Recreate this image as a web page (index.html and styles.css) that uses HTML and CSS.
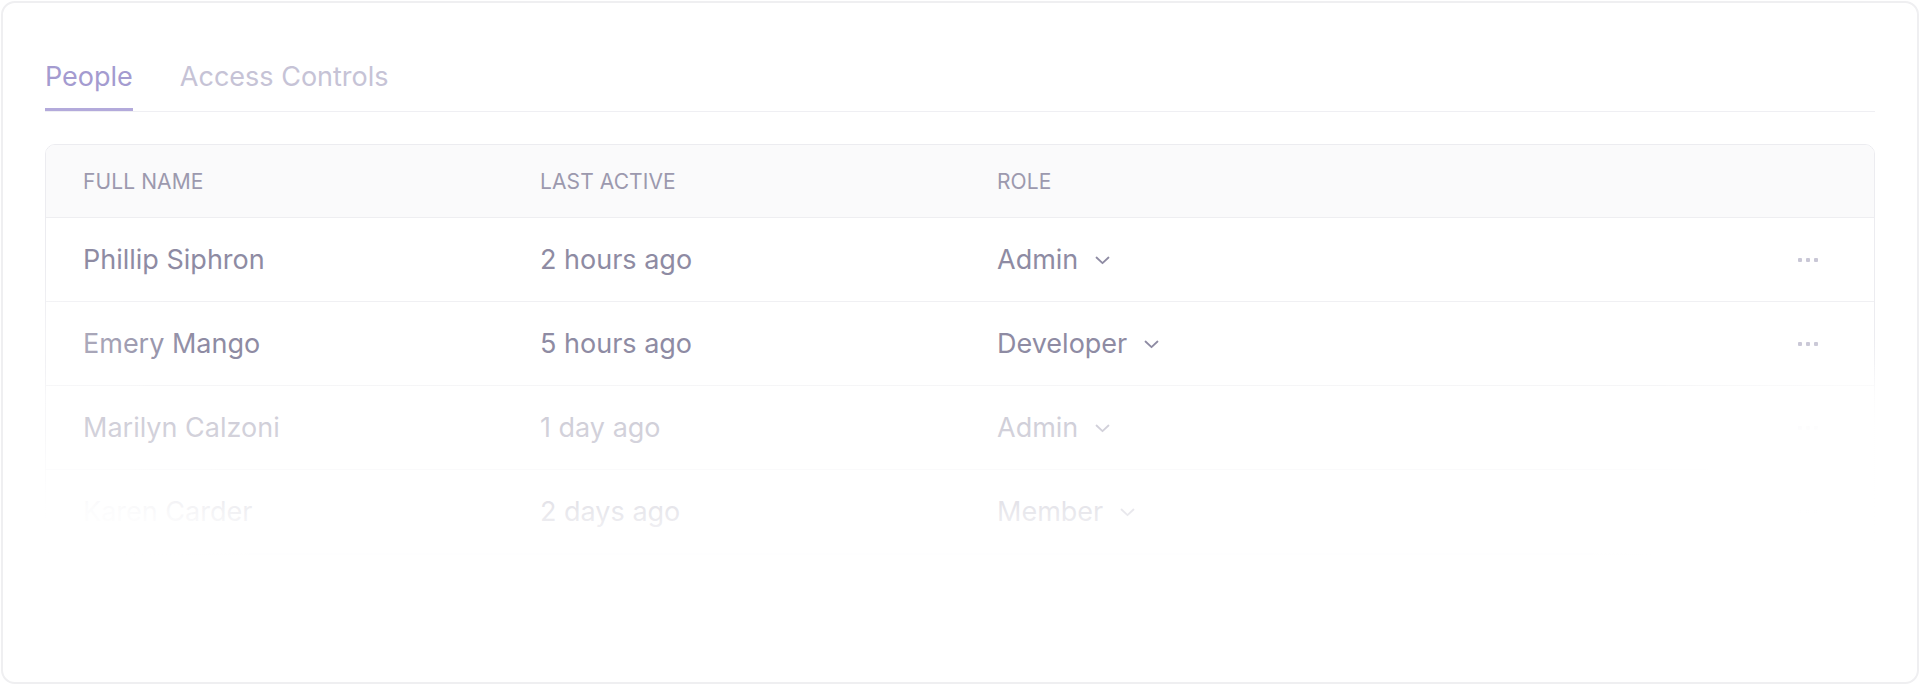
FILE: index.html
```html
<!DOCTYPE html>
<html lang="en">
<head>
<meta charset="utf-8">
<title>People</title>
<link rel="stylesheet" href="styles.css">
</head>
<body>
<div class="page">
  <section class="card">
    <nav class="tabs">
      <a class="tab tab-active">People</a>
      <a class="tab">Access Controls</a>
    </nav>
    <div class="table-wrap">
      <div class="table">
        <div class="row head">
          <div class="cell">FULL NAME</div>
          <div class="cell">LAST ACTIVE</div>
          <div class="cell">ROLE</div>
          <div class="cell"></div>
        </div>
        <div class="row">
          <div class="cell">Phillip Siphron</div>
          <div class="cell">2 hours ago</div>
          <div class="cell role">Admin <svg class="chev" viewBox="0 0 15 9" width="15" height="9"><polyline points="1.5,1.5 7.5,7.2 13.5,1.5"/></svg></div>
          <div class="cell end"><span class="dots"><i></i><i></i><i></i></span></div>
        </div>
        <div class="row">
          <div class="cell">Emery Mango</div>
          <div class="cell">5 hours ago</div>
          <div class="cell role">Developer <svg class="chev" viewBox="0 0 15 9" width="15" height="9"><polyline points="1.5,1.5 7.5,7.2 13.5,1.5"/></svg></div>
          <div class="cell end"><span class="dots"><i></i><i></i><i></i></span></div>
        </div>
        <div class="row">
          <div class="cell">Marilyn Calzoni</div>
          <div class="cell">1 day ago</div>
          <div class="cell role">Admin <svg class="chev" viewBox="0 0 15 9" width="15" height="9"><polyline points="1.5,1.5 7.5,7.2 13.5,1.5"/></svg></div>
          <div class="cell end"><span class="dots"><i></i><i></i><i></i></span></div>
        </div>
        <div class="row">
          <div class="cell">Karen Carder</div>
          <div class="cell">2 days ago</div>
          <div class="cell role">Member <svg class="chev" viewBox="0 0 15 9" width="15" height="9"><polyline points="1.5,1.5 7.5,7.2 13.5,1.5"/></svg></div>
          <div class="cell end"><span class="dots"><i></i><i></i><i></i></span></div>
        </div>
      </div>
    </div>
  </section>
</div>
</body>
</html>
```

FILE: styles.css
```css
* { box-sizing: border-box; }

html, body {
  margin: 0;
  background: #ffffff;
}

body {
  font-family: Inter, "Noto Sans", "Liberation Sans", sans-serif;
  color: #8e8ba3;
}

.page {
  padding: 1px;
}

.card {
  height: 683px;
  border: 2px solid #efeff1;
  border-radius: 14px;
  padding: 58px 42px 0 42px;
  overflow: hidden;
  background: #fff;
}

.tabs {
  display: flex;
  gap: 47px;
  border-bottom: 1px solid #efeff3;
}

.tab {
  font-size: 27px;
  line-height: 32px;
  padding-bottom: 15px;
  border-bottom: 3px solid transparent;
  color: #c6c3d6;
}

.tab-active {
  color: #a49bd0;
  border-bottom-color: #b3aadb;
}

.table-wrap {
  position: relative;
  margin-top: 32px;
}

.table-wrap::after {
  content: "";
  position: absolute;
  inset: -2px;
  pointer-events: none;
  background:
    radial-gradient(ellipse 300px 120px at 0% 100%, rgba(255,255,255,0.97) 0, rgba(255,255,255,0.88) 45%, rgba(255,255,255,0) 100%),
    radial-gradient(ellipse 360px 220px at 100% 100%, #fff 0, rgba(255,255,255,0.95) 60%, rgba(255,255,255,0) 100%),
    radial-gradient(ellipse 160px 80px at 0% 200px, rgba(255,255,255,0.35) 0, rgba(255,255,255,0) 100%),
    linear-gradient(180deg, rgba(255,255,255,0) 0, rgba(255,255,255,0) 220px, rgba(255,255,255,0.55) 255px, rgba(255,255,255,0.62) 300px, rgba(255,255,255,0.76) 360px, rgba(255,255,255,0.9) 395px, #fff 420px);
}

.table {
  border: 1px solid #ececf0;
  border-radius: 10px;
  overflow: hidden;
}

.row {
  display: grid;
  grid-template-columns: repeat(4, 1fr);
  align-items: center;
  height: 84px;
  border-bottom: 1px solid #f0f0f3;
}

.row.head {
  height: 73px;
  background: #fafafb;
  border-bottom: 1px solid #eeeef1;
}

.cell {
  padding-left: 37px;
  font-size: 27px;
  color: #8e8ba3;
  white-space: nowrap;
  display: flex;
  align-items: center;
}

.head .cell {
  font-size: 21px;
  letter-spacing: 0.1px;
  color: #9c99ae;
}

.role .chev {
  margin-left: 17px;
  margin-top: 2px;
  fill: none;
  stroke: #8e8ba3;
  stroke-width: 1.8;
  stroke-linecap: round;
  stroke-linejoin: round;
}

.cell.end {
  justify-content: flex-end;
  padding-right: 56px;
}

.dots {
  display: flex;
  gap: 4px;
}

.dots i {
  display: block;
  width: 4px;
  height: 4px;
  border-radius: 1px;
  background: #c9c7d6;
}
```
